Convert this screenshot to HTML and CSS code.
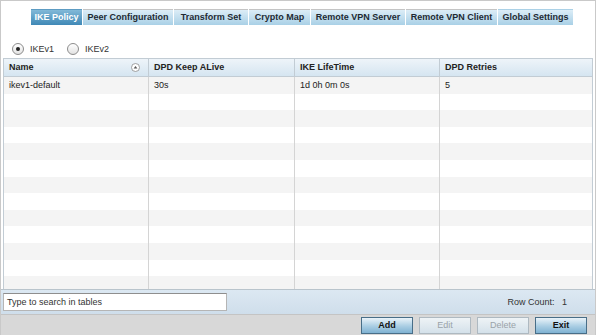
FILE: index.html
```html
<!DOCTYPE html>
<html>
<head>
    <title>IKE Policy</title>
    <meta name='viewport' content='width=device-width, initial-scale=1'>
    <link rel="stylesheet" href="styles.css">
</head>
<body>
    <div class="frame">
        <div class="tabs">
            <div class="tab active">IKE Policy</div>
            <div class="tab">Peer Configuration</div>
            <div class="tab">Transform Set</div>
            <div class="tab">Crypto Map</div>
            <div class="tab">Remote VPN Server</div>
            <div class="tab">Remote VPN Client</div>
            <div class="tab">Global Settings</div>
        </div>

        <div class="radios">
            <label class="radio"><span class="dot checked"></span>IKEv1</label>
            <label class="radio"><span class="dot"></span>IKEv2</label>
        </div>

        <div class="grid">
            <div class="row head">
                <div class="cell">Name <span class="sort"><svg width="9" height="9" viewBox="0 0 9 9"><circle cx="4.5" cy="4.5" r="4" fill="#fff" stroke="#8a8a8a" stroke-width="0.8"/><path d="M2.6 5.6 L4.5 3 L6.4 5.6 Z" fill="#555"/></svg></span></div>
                <div class="cell">DPD Keep ALive</div>
                <div class="cell">IKE LifeTime</div>
                <div class="cell">DPD Retries</div>
            </div>
            <div class="body" id="rows"></div>
        </div>

        <div class="searchbar">
            <div class="search">Type to search in tables</div>
            <div class="count">Row Count: <span>1</span></div>
        </div>

        <div class="toolbar">
            <button class="btn">Add</button>
            <button class="btn off">Edit</button>
            <button class="btn off">Delete</button>
            <button class="btn">Exit</button>
        </div>
    </div>

    <script>
        var data = [["ikev1-default", "30s", "1d 0h 0m 0s", "5"]];
        var body = document.getElementById('rows');
        for (var i = 0; i < 13; i++) {
            var r = document.createElement('div');
            r.className = 'row' + (i % 2 == 0 ? ' alt' : '');
            var vals = data[i] || ["", "", "", ""];
            vals.forEach(function(v) {
                var c = document.createElement('div');
                c.className = 'cell';
                c.innerText = v;
                r.appendChild(c);
            });
            body.appendChild(r);
        }
    </script>
</body>
</html>
```

FILE: styles.css
```css
html, body {
    margin: 0;
    padding: 0;
    font-family: "Liberation Sans", Arial, sans-serif;
    font-size: 9px;
    color: #222;
}
.frame {
    width: 594px;
    height: 334px;
    border: 1px solid #c9c9c9;
    border-bottom: none;
    display: flex;
    flex-direction: column;
    background: #fff;
}
.tabs {
    display: flex;
    padding: 8px 0 0 30px;
    height: 16px;
}
.tab {
    box-sizing: border-box;
    height: 16px;
    line-height: 15px;
    margin-right: 1px;
    font-weight: bold;
    color: #1e2a33;
    background: linear-gradient(#dcedf7, #a9d0e6);
    border-top: 1px solid #c4c4c4;
    white-space: nowrap;
    text-align: center;
}
.tab:nth-child(2) { width: 90px; }
.tab:nth-child(3) { width: 74px; }
.tab:nth-child(4) { width: 61px; }
.tab:nth-child(5) { width: 94px; }
.tab:nth-child(6) { width: 91px; }
.tab:nth-child(7) { width: 75px; border-top-color: transparent; }
.tab.active {
    width: 51px;
    color: #fff;
    background: linear-gradient(#82b9d8, #3f88b6);
    border-top-color: #5d9cc3;
}
.radios {
    display: flex;
    align-items: center;
    height: 33px;
    padding: 15px 0 0 11px;
    box-sizing: border-box;
    gap: 13px;
}
.radio {
    display: flex;
    align-items: center;
    gap: 6px;
    color: #333;
}
.dot {
    width: 10px;
    height: 10px;
    border: 1px solid #8c8c8c;
    border-radius: 50%;
    background: linear-gradient(#fff, #e2e2e2);
    position: relative;
}
.dot.checked::after {
    content: "";
    position: absolute;
    left: 3px;
    top: 3px;
    width: 4px;
    height: 4px;
    border-radius: 50%;
    background: #222;
}
.grid {
    margin: 0 2px;
    width: 588px;
    border: 1px solid #c2ccd4;
    border-bottom: none;
    height: 230px;
    overflow: hidden;
}
.row {
    display: grid;
    grid-template-columns: 145px 146px 145px 1fr;
    height: 16.6px;
}
.row.alt { background: #f4f4f4; }
.head {
    height: 17px;
    background: linear-gradient(#eef4f9, #d5e5f1);
    border-bottom: 1px solid #c2ccd4;
    font-weight: bold;
}
.cell {
    border-right: 1px solid #d4d4d4;
    padding-left: 5px;
    line-height: 16.6px;
    white-space: nowrap;
    display: flex;
    align-items: center;
}
.head .cell { border-right-color: #c2ccd4; }
.cell:last-child { border-right: none; }
.sort {
    margin-left: auto;
    margin-right: 8px;
    display: flex;
}
.searchbar {
    height: 24px;
    background: linear-gradient(#dce8f2, #cfdeeb);
    display: flex;
    align-items: center;
    padding: 0 2px;
    border-top: 1px solid #b9c4cc;
}
.search {
    width: 219px;
    height: 16px;
    line-height: 16px;
    background: #fff;
    border: 1px solid #b5b5b5;
    border-top-color: #8e8e8e;
    padding-left: 3px;
    color: #333;
}
.count {
    margin-left: auto;
    margin-right: 26px;
    color: #333;
}
.count span { margin-left: 5px; }
.toolbar {
    flex: 1;
    background: #d8d8d8;
    border-top: 1px solid #c4c4c4;
    display: flex;
    justify-content: flex-end;
    align-items: center;
    gap: 6px;
    padding-right: 8px;
}
.btn {
    width: 52px;
    height: 17px;
    font-family: "Liberation Sans", Arial, sans-serif;
    font-size: 9px;
    font-weight: bold;
    color: #111;
    border: 1px solid #486e88;
    background: linear-gradient(#eaf3f9, #a9cde3 55%, #7fb2d2);
    padding: 0;
}
.btn.off {
    color: #9aa3a9;
    font-weight: normal;
    border-color: #aeb9c1;
    background: linear-gradient(#eef3f6, #d4e1ea);
}
```
